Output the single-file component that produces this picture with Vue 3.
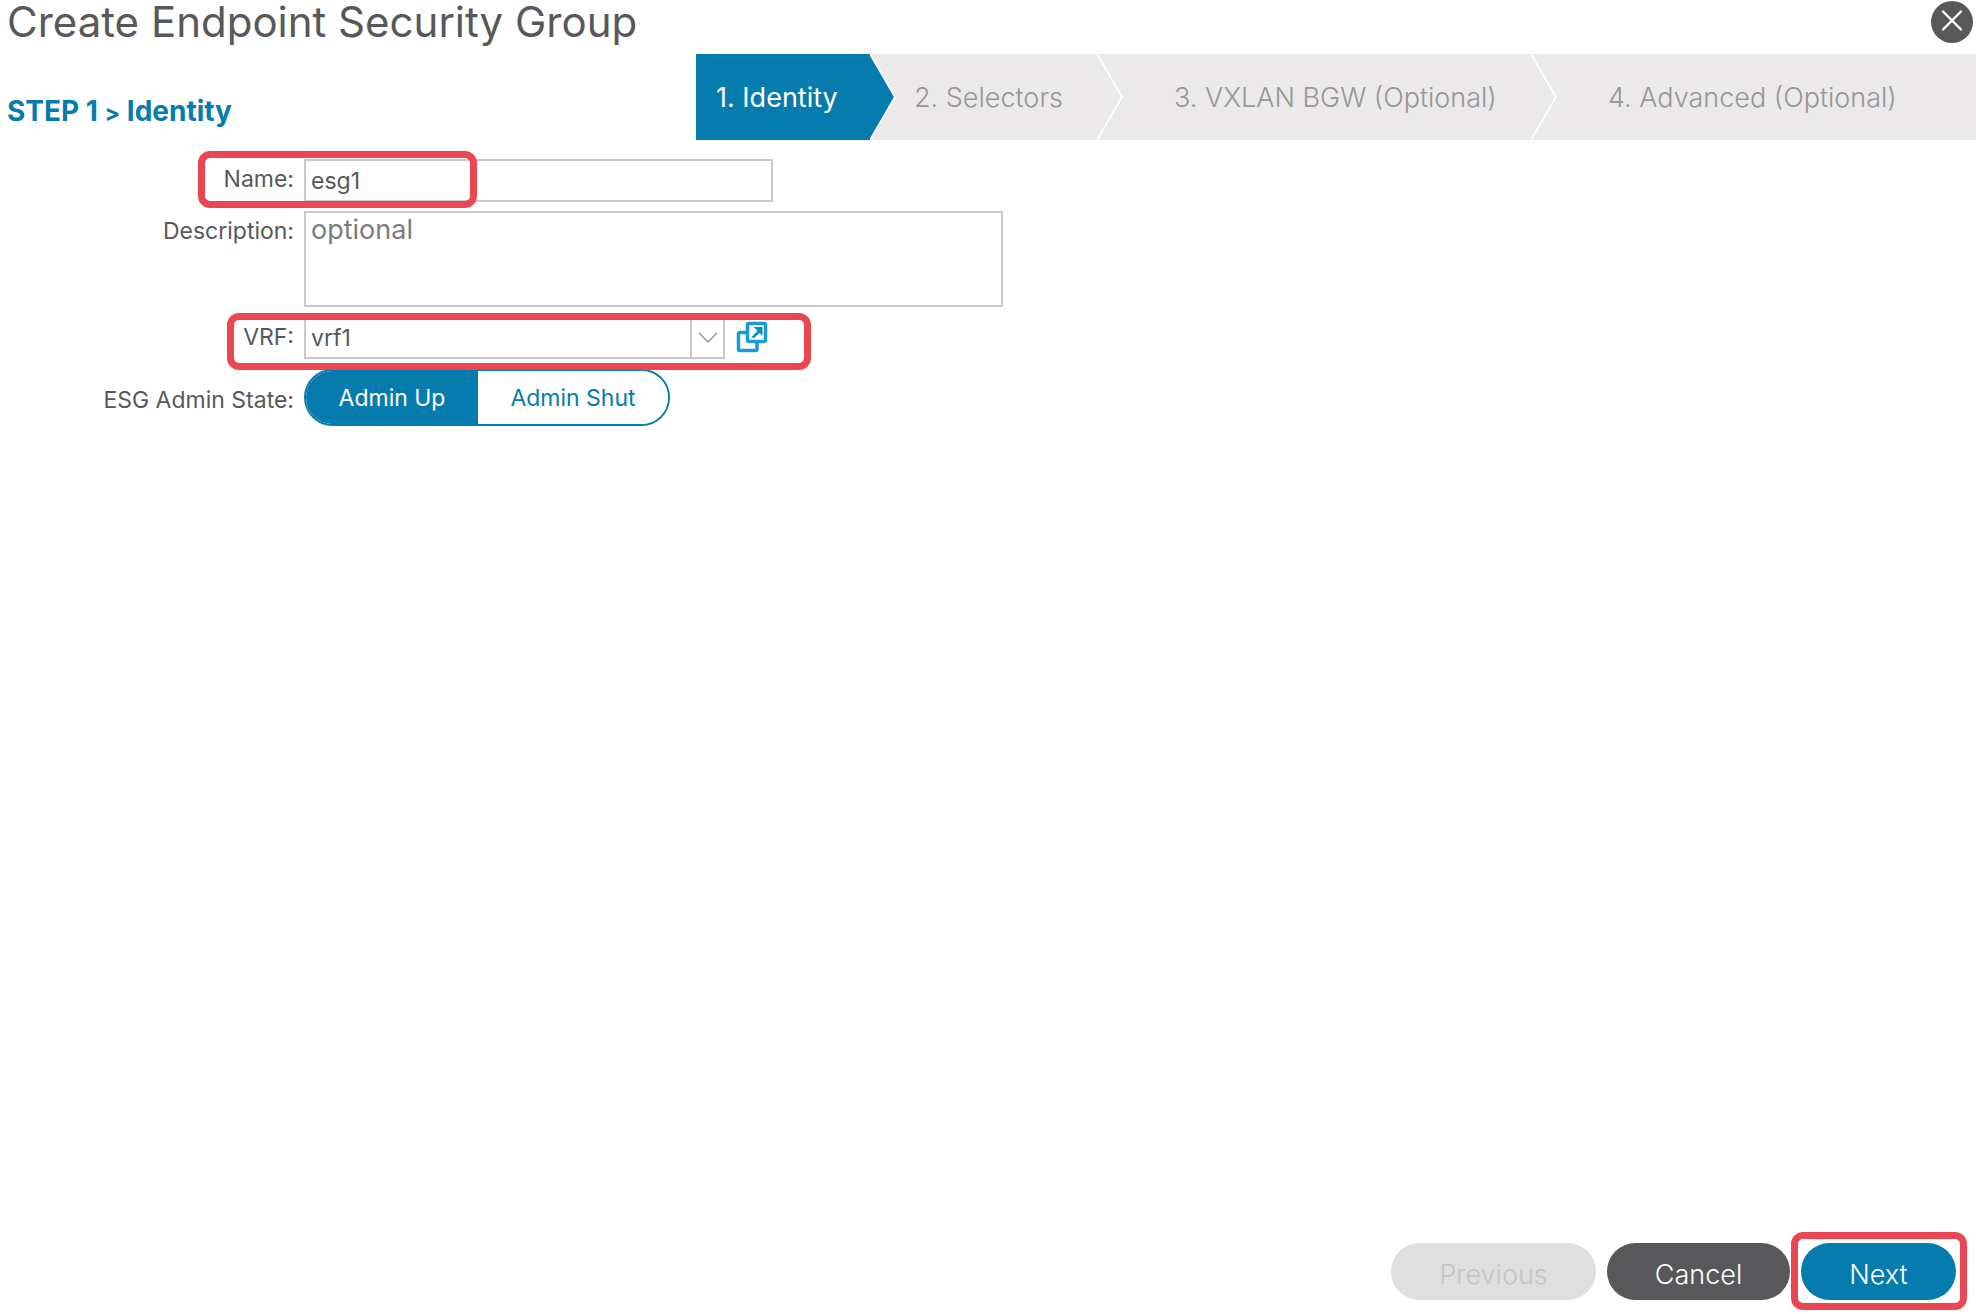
<script setup>
import { ref } from 'vue'

const steps = [
  { label: '1. Identity', size: 'first' },
  { label: '2. Selectors', size: 'second' },
  { label: '3. VXLAN BGW (Optional)', size: 'third' },
  { label: '4. Advanced (Optional)', size: 'fourth' }
]
const current = ref(0)
const name = ref('esg1')
const description = ref('')
const vrf = ref('vrf1')
const adminState = ref('up')
</script>

<template>
  <main class="dialog">
    <header class="titlebar">
      <h1>Create Endpoint Security Group</h1>
      <button class="close" type="button" aria-label="Close">
        <svg viewBox="0 0 42 42" width="42" height="42" aria-hidden="true">
          <circle cx="21" cy="21" r="21" fill="#58585b" />
          <path d="M12 10.500 30 28.500M30 10.500 12 28.500" stroke="#fff" stroke-width="2.400" stroke-linecap="round" />
        </svg>
      </button>
    </header>

    <div class="stepbar">
      <h2>STEP 1 <span class="gt">&gt;</span> Identity</h2>
      <ol class="wizard">
        <li
          v-for="(step, i) in steps"
          :key="step.label"
          :class="['step', step.size, { active: i === current }]"
          :aria-current="i === current ? 'step' : undefined"
        >
          <span>{{ step.label }}</span>
          <svg v-if="i < steps.length - 1" class="chevron" viewBox="0 0 26 86" width="26" height="86" aria-hidden="true">
            <path v-if="i === current" d="M0 0 25 43 0 86Z" fill="#067bae" />
            <path d="M0 0 25 43 0 86" fill="none" stroke="#fff" stroke-width="1.800" />
          </svg>
        </li>
      </ol>
    </div>

    <form class="form" @submit.prevent>
      <div class="row name-row">
        <label for="name">Name:</label>
        <input id="name" v-model="name" class="field name" type="text" />
        <span class="mark"></span>
      </div>
      <div class="row">
        <label for="description">Description:</label>
        <textarea id="description" v-model="description" class="field description" placeholder="optional"></textarea>
      </div>
      <div class="row vrf-row">
        <label for="vrf">VRF:</label>
        <div class="combo">
          <select id="vrf" v-model="vrf" class="field">
            <option>vrf1</option>
          </select>
          <span class="trigger">
            <svg viewBox="0 0 20 12" width="20" height="12" aria-hidden="true">
              <path d="M1 1 10 10 19 1" fill="none" stroke="#9a9b9c" stroke-width="1.500" />
            </svg>
          </span>
        </div>
        <a class="open" href="#" aria-label="Open VRF">
          <svg viewBox="0 0 32 32" width="32" height="32" aria-hidden="true">
            <rect x="2.500" y="11.500" width="18.500" height="18" rx="1.500" fill="#fff" stroke="#149dd6" stroke-width="3.500" />
            <rect x="11.500" y="2.500" width="18" height="18" rx="1.500" fill="#fff" stroke="#149dd6" stroke-width="3.500" />
            <path d="M17.500 6h9v9l-3-3-6 5.600-1.800-1.800 5.800-6Z" fill="#0c8cc4" />
          </svg>
        </a>
        <span class="mark"></span>
      </div>
      <div class="row state-row">
        <span class="label">ESG Admin State:</span>
        <div class="toggle" role="group" aria-label="ESG Admin State">
          <button type="button" :class="{ on: adminState === 'up' }" @click="adminState = 'up'">Admin Up</button>
          <button type="button" :class="{ on: adminState === 'shut' }" @click="adminState = 'shut'">Admin Shut</button>
        </div>
      </div>
    </form>

    <footer class="footer">
      <button class="pill previous" type="button" disabled>Previous</button>
      <button class="pill cancel" type="button">Cancel</button>
      <div class="next-wrap">
        <button class="pill next" type="button">Next</button>
        <span class="mark"></span>
      </div>
    </footer>
  </main>
</template>

<style>
body {
  margin: 0;
  background: #fff;
}
</style>

<style scoped>
* {
  box-sizing: border-box;
}

.dialog {
  display: flex;
  flex-direction: column;
  min-height: 100vh;
  font-family: Inter, "Liberation Sans", sans-serif;
  color: #58585b;
}

button,
input,
textarea,
select {
  margin: 0;
  font-family: inherit;
}

h1,
h2 {
  margin: 0;
}

.titlebar {
  display: flex;
  justify-content: space-between;
  align-items: flex-start;
  height: 44px;
  padding: 0 3px 0 7px;
}

h1 {
  font-size: 42px;
  font-weight: 400;
  line-height: 44px;
  white-space: nowrap;
}

.close {
  display: flex;
  padding: 1px 0 0;
  border: 0;
  background: none;
}

.stepbar {
  display: flex;
  height: 86px;
  margin-top: 10px;
}

h2 {
  width: 696px;
  flex: none;
  padding: 39px 0 0 7px;
  color: #067bae;
  font-size: 28px;
  font-weight: 700;
  line-height: 36px;
}

.gt {
  font-size: 23px;
}

.wizard {
  display: flex;
  flex: 1;
  margin: 0;
  padding: 0;
  list-style: none;
  background: #ebe9ea;
  color: #979698;
  font-size: 27px;
  font-weight: 300;
}

.step {
  position: relative;
  display: flex;
  align-items: center;
  white-space: nowrap;
}

.first {
  width: 174px;
  padding-left: 20px;
}

.second {
  width: 227px;
  padding-left: 44px;
}

.third {
  width: 434px;
  padding-left: 77px;
}

.fourth {
  flex: 1;
  padding-left: 77px;
}

.active {
  background: #067bae;
  color: #fff;
  font-weight: 400;
}

.chevron {
  position: absolute;
  top: 0;
  left: 100%;
}

.form {
  display: flex;
  flex-direction: column;
  gap: 10px;
  padding-top: 19px;
}

.row {
  position: relative;
  display: flex;
  align-items: flex-start;
}

label,
.label {
  width: 304px;
  flex: none;
  padding-right: 10px;
  font-size: 23px;
  font-weight: 400;
  line-height: 40px;
  text-align: right;
}

.field {
  border: 2px solid #c8caca;
  border-radius: 0;
  outline: 0;
  background: #fff;
  color: #58585b;
  font-size: 23px;
  font-weight: 400;
}

.name {
  width: 469px;
  height: 43px;
  padding: 0 5px;
}

.description {
  display: block;
  width: 699px;
  height: 96px;
  padding: 1px 5px;
  font-size: 27px;
  line-height: 32px;
  resize: none;
}

.description::placeholder {
  color: #7c7c7e;
}

.combo {
  display: grid;
  width: 421px;
}

.combo > * {
  grid-area: 1 / 1;
}

.combo select {
  height: 42px;
  padding: 0 5px;
  appearance: none;
}

.trigger {
  display: flex;
  align-items: center;
  justify-content: center;
  justify-self: end;
  width: 35px;
  border: solid #c8caca;
  border-width: 0 2px;
  pointer-events: none;
}

.open {
  display: flex;
  margin-left: 11px;
  padding-top: 4px;
}

.mark {
  position: absolute;
  z-index: 1;
  border: 7px solid #eb4753;
  border-radius: 12px;
  pointer-events: none;
}

.name-row .mark {
  top: -8px;
  left: 198px;
  width: 279px;
  height: 57px;
}

.vrf-row .mark {
  top: -4px;
  left: 227px;
  width: 584px;
  height: 57px;
}

.name-row {
  margin-bottom: -1px;
}

.toggle {
  display: flex;
  overflow: hidden;
  height: 57px;
  border: 2px solid #067bae;
  border-radius: 29px;
}

.toggle button {
  width: 190px;
  padding: 0;
  border: 0;
  background: #fff;
  color: #067bae;
  font-size: 23px;
  font-weight: 400;
}

.toggle button.on {
  width: 172px;
  background: #067bae;
  color: #fff;
}

.state-row .label {
  line-height: 62px;
}

.footer {
  display: flex;
  align-items: center;
  gap: 11px;
  margin-top: auto;
  padding: 0 20px 14px 0;
  justify-content: flex-end;
}

.pill {
  height: 57px;
  padding: 6px 0 0;
  border: 0;
  border-radius: 29px;
  color: #fff;
  font-size: 27px;
  font-weight: 300;
}

.previous {
  width: 205px;
  background: #dfdfdf;
  color: #c4c4c6;
}

.cancel {
  width: 183px;
  background: #58585b;
}

.next-wrap {
  position: relative;
}

.next {
  display: block;
  width: 155px;
  background: #067bae;
}

.next-wrap .mark {
  inset: -11px -11px -10px -10px;
}
</style>
